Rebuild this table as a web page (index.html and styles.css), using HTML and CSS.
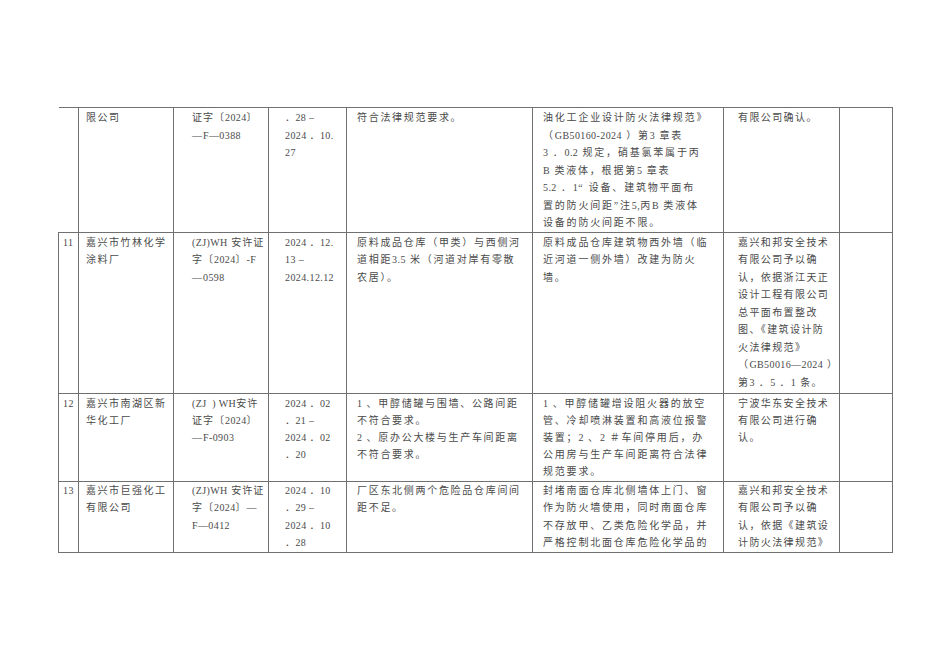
FILE: index.html
```html
<!DOCTYPE html>
<html lang="zh-CN">
<head>
<meta charset="utf-8">
<title>table</title>
<link rel="stylesheet" href="styles.css">
</head>
<body>
<div class="page">
<table class="grid">
<colgroup>
<col class="c1"><col class="c2"><col class="c3"><col class="c4"><col class="c5"><col class="c6"><col class="c7"><col class="c8">
</colgroup>
<tr class="r0">
<td class="no first"></td>
<td class="name">限公司</td>
<td class="lic">证字〔<span class="n">2024</span>〕<br>—<span class="n">F—0388</span></td>
<td class="date"><span class="n">．28 –</span><br><span class="n">2024 ．10.</span><br><span class="n">27</span></td>
<td class="issue">符合法律规范要求。</td>
<td class="fix">油化工企业设计防火法律规范》<br>（<span class="n">GB50160-2024</span> ）第<span class="n">3</span> 章表<br><span class="n">3</span> ．<span class="n">0.2</span> 规定，硝基氯苯属于丙<br><span class="n">B</span> 类液体，根据第<span class="n">5</span> 章表<br><span class="n">5.2</span> ．<span class="n">1</span>“ 设备、建筑物平面布<br>置的防火间距”注<span class="n">5,</span>丙<span class="n">B</span> 类液体<br>设备的防火间距不限。</td>
<td class="ver">有限公司确认。</td>
<td class="last"></td>
</tr>
<tr class="r11">
<td class="no"><span class="n">11</span></td>
<td class="name">嘉兴市竹林化学<br>涂料厂</td>
<td class="lic"><span class="n">(ZJ)WH</span> 安许证<br>字〔<span class="n">2024</span>〕<span class="n">-F</span><br>—<span class="n">0598</span></td>
<td class="date"><span class="n">2024 ．12.</span><br><span class="n">13 –</span><br><span class="n">2024.12.12</span></td>
<td class="issue">原料成品仓库（甲类）与西侧河<br>道相距<span class="n">3.5</span> 米（河道对岸有零散<br>农居）。</td>
<td class="fix">原料成品仓库建筑物西外墙（临<br>近河道一侧外墙）改建为防火<br>墙。</td>
<td class="ver">嘉兴和邦安全技术<br>有限公司予以确<br>认，依据浙江天正<br>设计工程有限公司<br>总平面布置整改<br>图、《建筑设计防<br>火法律规范》<br>（<span class="n">GB50016—2024</span> ）<br>第<span class="n">3</span> ．<span class="n">5</span> ．<span class="n">1</span> 条。</td>
<td class="last"></td>
</tr>
<tr class="r12">
<td class="no"><span class="n">12</span></td>
<td class="name">嘉兴市南湖区新<br>华化工厂</td>
<td class="lic"><span class="n">(ZJ&nbsp;&nbsp;) WH</span>安许<br>证字〔<span class="n">2024</span>〕<br>—<span class="n">F-0903</span></td>
<td class="date"><span class="n">2024 ．02</span><br><span class="n">．21 –</span><br><span class="n">2024 ．02</span><br><span class="n">．20</span></td>
<td class="issue"><span class="n">1</span> 、甲醇储罐与围墙、公路间距<br>不符合要求。<br><span class="n">2</span> 、原办公大楼与生产车间距离<br>不符合要求。</td>
<td class="fix"><span class="n">1</span> 、甲醇储罐增设阻火器的放空<br>管、冷却喷淋装置和高液位报警<br>装置；<span class="n">2</span> 、<span class="n">2</span> ＃车间停用后，办<br>公用房与生产车间距离符合法律<br>规范要求。</td>
<td class="ver">宁波华东安全技术<br>有限公司进行确<br>认。</td>
<td class="last"></td>
</tr>
<tr class="r13">
<td class="no"><span class="n">13</span></td>
<td class="name">嘉兴市巨强化工<br>有限公司</td>
<td class="lic"><span class="n">(ZJ)WH</span> 安许证<br>字〔<span class="n">2024</span>〕—<br><span class="n">F—0412</span></td>
<td class="date"><span class="n">2024 ．10</span><br><span class="n">．29 –</span><br><span class="n">2024 ．10</span><br><span class="n">．28</span></td>
<td class="issue">厂区东北侧两个危险品仓库间间<br>距不足。</td>
<td class="fix">封堵南面仓库北侧墙体上门、窗<br>作为防火墙使用，同时南面仓库<br>不存放甲、乙类危险化学品，并<br>严格控制北面仓库危险化学品的</td>
<td class="ver">嘉兴和邦安全技术<br>有限公司予以确<br>认，依据《建筑设<br>计防火法律规范》</td>
<td class="last"></td>
</tr>
</table>
</div>
</body>
</html>
```
FILE: styles.css
```css
html, body {
  margin: 0;
  padding: 0;
  background: #ffffff;
}
.page {
  padding: 107px 0 0 58px;
}
.grid {
  border-collapse: collapse;
  table-layout: fixed;
  width: 834px;
  font-family: "Liberation Serif", "Noto Sans CJK SC", serif;
  font-size: 10px;
  line-height: 17.5px;
  color: #4a4a4a;
}
.c1 { width: 20px; }
.c2 { width: 95px; }
.c3 { width: 95px; }
.c4 { width: 78px; }
.c5 { width: 186px; }
.c6 { width: 191px; }
.c7 { width: 116px; }
.c8 { width: 53px; }
.grid td {
  border: 1px solid #707070;
  vertical-align: top;
  padding: 1px 0 0 0;
  white-space: nowrap;
  overflow: hidden;
  letter-spacing: 1.6px;
}
.grid td.first {
  border-left: none;
}
.n {
  letter-spacing: 0.4px;
}
td.no { padding-left: 4px; }
td.name { padding-left: 7px; letter-spacing: 1.5px; }
td.lic { padding-left: 18px; letter-spacing: 1.0px; }
td.date { padding-left: 16px; }
td.issue { padding-left: 10px; letter-spacing: 1.7px; }
td.fix { padding-left: 10px; letter-spacing: 1.8px; }
td.ver { padding-left: 14px; letter-spacing: 1.4px; }
.r0 td { height: 121px; }
.r11 td { height: 159px; }
.r12 td { height: 86px; line-height: 17.2px; }
.r13 td { height: 70px; padding-top: 0; }
```
